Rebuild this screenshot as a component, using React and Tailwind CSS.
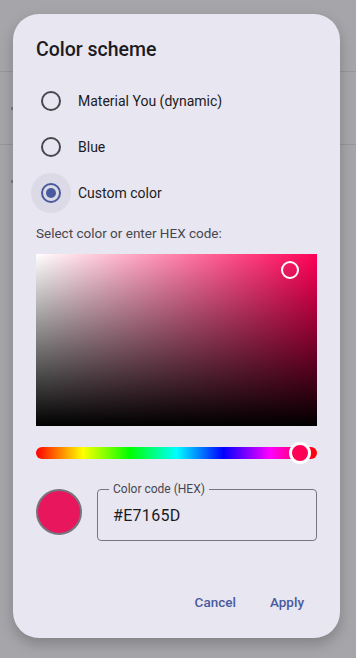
import React, { useState } from "react";

const options = ["Material You (dynamic)", "Blue", "Custom color"];

export default function App() {
  const [selected, setSelected] = useState(2);

  return (
    <div className="relative w-[356px] h-[658px] overflow-hidden bg-[#a6a5aa] font-['Roboto',sans-serif]">
      {/* page behind the scrim */}
      <div className="flex flex-col">
        <div className="h-[71px]"></div>
        <div className="h-px bg-[#97969b]"></div>
        <div className="h-[72px] flex items-center pl-[11px]">
          <span className="w-[2px] h-[3px] bg-[#7c7b80]"></span>
        </div>
        <div className="h-px bg-[#97969b]"></div>
        <div className="h-[72px] flex items-center pl-[11px]">
          <span className="w-[2px] h-[3px] bg-[#7c7b80]"></span>
        </div>
      </div>

      {/* dialog */}
      <div className="absolute left-[13px] top-[14px] w-[327px] h-[624px] rounded-[26px] bg-[#e8e6f0] shadow-[0_6px_14px_rgba(0,0,0,0.22)] flex flex-col px-[23px] pt-[22px] pb-[16px]">
        <h2 className="text-[19.5px] leading-[28px] font-medium text-[#1c1b1f] mb-[14px]">
          Color scheme
        </h2>

        <div className="flex flex-col">
          {options.map((label, i) => (
            <div
              key={label}
              onClick={() => setSelected(i)}
              className="h-[46px] flex items-center cursor-pointer"
            >
              <div className="relative w-[20px] h-[20px] ml-[5px] mr-[17px]">
                {selected === i && (
                  <span className="absolute left-[-10px] top-[-10px] w-[40px] h-[40px] rounded-full bg-[#dbdae6]"></span>
                )}
                <span
                  className={
                    selected === i
                      ? "absolute inset-0 rounded-full border-2 border-[#4a5a9e] flex items-center justify-center"
                      : "absolute inset-0 rounded-full border-2 border-[#48464f]"
                  }
                >
                  {selected === i && (
                    <span className="w-[10px] h-[10px] rounded-full bg-[#4a5a9e]"></span>
                  )}
                </span>
              </div>
              <span className="text-[14px] text-[#1c1b1f]">{label}</span>
            </div>
          ))}
        </div>

        <p className="mt-[7px] text-[13.5px] leading-[20px] text-[#47464f]">
          Select color or enter HEX code:
        </p>

        {/* saturation / value plane */}
        <div className="relative mt-[11px] w-[281px] h-[172px] bg-[#ff0057]">
          <div className="absolute inset-0 bg-linear-to-r from-white to-transparent"></div>
          <div className="absolute inset-0 bg-linear-to-b from-transparent to-black"></div>
          <span className="absolute left-[245px] top-[7px] w-[18px] h-[18px] rounded-full border-[2.5px] border-white"></span>
        </div>

        {/* hue slider */}
        <div className="relative mt-[21px] w-[281px] h-[12px] rounded-full bg-[linear-gradient(to_right,#f00,#ff0,#0f0,#0ff,#00f,#f0f,#f00)]">
          <span className="absolute left-[253px] top-[-5px] w-[22px] h-[22px] rounded-full border-[3px] border-white bg-[#ff0057]"></span>
        </div>

        <div className="mt-[30px] flex items-start">
          <div className="w-[46px] h-[46px] rounded-full bg-[#e7165d] border-2 border-[#77747e]"></div>
          <div className="relative ml-[15px] w-[220px] h-[52px] rounded-[4px] border border-[#77757f] flex items-center pl-[15px]">
            <span className="absolute left-[11px] top-[-9px] px-[4px] bg-[#e8e6f0] text-[12px] leading-[16px] text-[#47464f]">
              Color code (HEX)
            </span>
            <span className="text-[16px] tracking-[0.3px] text-[#1c1b1f] mt-[1px]">#E7165D</span>
          </div>
        </div>

        <div className="mt-auto flex justify-end gap-[10px] pr-[1px]">
          <button className="h-[40px] px-[12px] text-[13.5px] font-medium text-[#4a5a9e]">
            Cancel
          </button>
          <button className="h-[40px] px-[12px] text-[13.5px] font-medium text-[#4a5a9e]">
            Apply
          </button>
        </div>
      </div>
    </div>
  );
}
